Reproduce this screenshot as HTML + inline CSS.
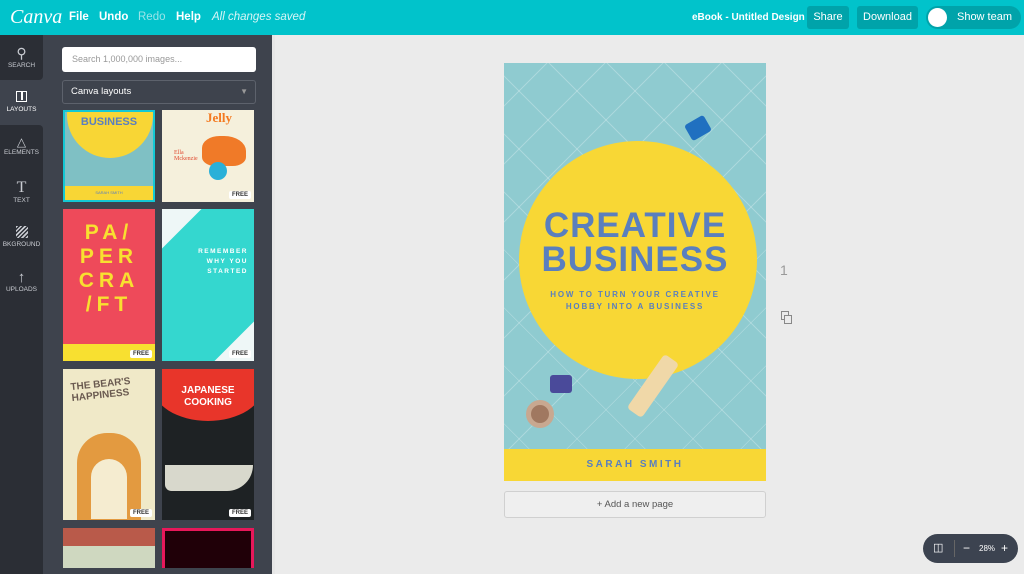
<!DOCTYPE html>
<html><head><meta charset="utf-8"><style>
*{box-sizing:border-box;margin:0;padding:0}
body{width:1024px;height:574px;overflow:hidden;background:#ebebeb;font-family:"Liberation Sans",sans-serif;position:relative}
.top{position:absolute;left:0;top:0;width:1024px;height:35px;background:#01c3cb;color:#fff;font-size:11.5px;font-weight:bold}
.top span{position:absolute;top:11px}
.btn{position:absolute;top:6px;height:23px;background:#00a3aa;border-radius:3px;color:#fff;font-size:11px;text-align:center;line-height:23px;font-weight:normal}
.rail{position:absolute;left:0;top:35px;width:43px;height:539px;background:#3e434d}
.ri{position:absolute;left:0;width:43px;color:#c9ccd2;font-size:6.5px;text-align:center}
.panel{position:absolute;left:43px;top:35px;width:232px;height:539px;background:#3e434d;overflow:hidden}
.th{position:absolute;overflow:hidden}
.free{position:absolute;right:3px;bottom:3px;background:#fff;color:#333;font-size:6px;font-weight:bold;padding:1px 3px;border-radius:2px}
</style></head><body>
<div class="top">
<span style="left:10px;top:6px;font-family:'Liberation Serif',serif;font-style:italic;font-size:20px;font-weight:normal">Canva</span>
<span style="left:69px">File</span><span style="left:99px">Undo</span><span style="left:138px;color:#9ae4e8;font-weight:normal">Redo</span><span style="left:176px">Help</span>
<span style="left:212px;font-style:italic;font-weight:normal;color:#d8f5f6">All changes saved</span>
<span style="left:692px;font-size:10px;top:12px">eBook - Untitled Design</span>
<div class="btn" style="left:807px;width:42px">Share</div>
<div class="btn" style="left:857px;width:61px">Download</div>
<div class="btn" style="left:926px;width:95px;border-radius:12px;padding-left:22px">Show team<div style="position:absolute;left:2px;top:2px;width:19px;height:19px;border-radius:50%;background:#fff"></div></div>
</div>
<div class="rail">
<div style="position:absolute;left:0;top:0;width:43px;height:45px;background:#2b2e35;border-radius:0 0 4px 0"></div>
<div style="position:absolute;left:0;top:90px;width:43px;height:449px;background:#2b2e35;border-radius:0 4px 0 0"></div>
<div class="ri" style="top:10px"><div style="font-size:14px">&#9906;</div>SEARCH</div>
<div class="ri" style="top:56px;color:#fff"><div style="width:11px;height:11px;border:1.5px solid #fff;margin:0 auto 4px;position:relative"><div style="position:absolute;left:4px;top:0;width:1.5px;height:8px;background:#fff"></div></div>LAYOUTS</div>
<div class="ri" style="top:100px"><div style="font-size:12px">&#9651;</div>ELEMENTS</div>
<div class="ri" style="top:144px"><div style="font-size:16px;font-family:'Liberation Serif'">T</div>TEXT</div>
<div class="ri" style="top:191px"><div style="width:12px;height:12px;margin:0 auto 3px;background:repeating-linear-gradient(135deg,#c9ccd2 0 1.5px,transparent 1.5px 3px)"></div>BKGROUND</div>
<div class="ri" style="top:234px"><div style="font-size:15px">&#8593;</div>UPLOADS</div>
</div>
<div class="panel">
<div style="position:absolute;left:19px;top:12px;width:194px;height:25px;background:#fff;border-radius:3px;color:#999;font-size:9px;line-height:25px;padding-left:10px">Search 1,000,000 images...</div>
<div style="position:absolute;left:19px;top:45px;width:194px;height:24px;border:1px solid #5d626c;border-radius:3px;color:#fff;font-size:9.5px;line-height:22px;padding-left:8px">Canva layouts<span style="position:absolute;right:7px;top:0;color:#999;font-size:8px">&#9660;</span></div>
<div style="position:absolute;left:229px;top:0;width:3px;height:539px;background:#e6e6e6"></div>
<div class="th" style="left:20px;top:75px;width:92px;height:92px;background:#7fc0c4;border:2px solid #14c8d4">
<div style="position:absolute;left:2px;top:-40px;width:86px;height:86px;border-radius:50%;background:#f8d635"></div>
<div style="position:absolute;left:0;top:4px;width:88px;text-align:center;color:#5a7fc0;font-weight:900;font-size:11px">BUSINESS</div>
<div style="position:absolute;left:0;bottom:0;width:88px;height:14px;background:#f8d635;color:#5a7fc0;font-size:4px;text-align:center;line-height:14px">SARAH SMITH</div></div>
<div class="th" style="left:119px;top:75px;width:92px;height:92px;background:#f5f0dc">
<div style="position:absolute;left:44px;top:0;color:#f47a20;font-family:'Liberation Serif';font-size:13px;font-weight:bold">Jelly</div>
<div style="position:absolute;left:40px;top:26px;width:44px;height:30px;background:#f07a28;border-radius:40% 50% 30% 30%"></div>
<div style="position:absolute;left:47px;top:52px;width:18px;height:18px;border-radius:50%;background:#2ab0d8"></div>
<div style="position:absolute;left:12px;top:40px;color:#e04a30;font-family:'Liberation Serif';font-size:6px">Ella<br>Mckenzie</div>
<div class="free">FREE</div></div>
<div class="th" style="left:20px;top:174px;width:92px;height:152px;background:#ee4a5a">
<div style="position:absolute;left:0;top:12px;width:92px;text-align:center;color:#f8e030;font-weight:bold;font-size:21px;letter-spacing:5px;line-height:24px">PA/<br>PER<br>CRA<br>/FT</div>
<div style="position:absolute;left:0;bottom:0;width:92px;height:17px;background:#f8e030"></div>
<div class="free">FREE</div></div>
<div class="th" style="left:119px;top:174px;width:92px;height:152px;background:#34d7cf">
<div style="position:absolute;left:-40px;top:-40px;width:70px;height:70px;background:#eef7f7;transform:rotate(45deg)"></div>
<div style="position:absolute;right:-40px;bottom:-40px;width:70px;height:70px;background:#eef7f7;transform:rotate(45deg)"></div>
<div style="position:absolute;right:6px;top:38px;text-align:right;color:#fff;font-size:6.5px;font-weight:bold;letter-spacing:1.5px;line-height:10px">REMEMBER<br>WHY YOU<br>STARTED</div>
<div class="free">FREE</div></div>
<div class="th" style="left:20px;top:334px;width:92px;height:151px;background:#f0e9c8">
<div style="position:absolute;left:8px;top:10px;color:#6a5a50;font-weight:bold;font-size:10px;transform:rotate(-6deg)">THE BEAR'S<br>HAPPINESS</div>
<div style="position:absolute;left:14px;top:64px;width:64px;height:90px;background:#e39a40;border-radius:30px 30px 0 0"></div>
<div style="position:absolute;left:28px;top:90px;width:36px;height:60px;background:#f5ecd0;border-radius:18px 18px 0 0"></div>
<div class="free">FREE</div></div>
<div class="th" style="left:119px;top:334px;width:92px;height:151px;background:#1e2224">
<div style="position:absolute;left:-10px;top:-20px;width:112px;height:72px;background:#e8352a;border-radius:0 0 50% 50%"></div>
<div style="position:absolute;left:0;top:16px;width:92px;text-align:center;color:#fff;font-weight:bold;font-size:10px;line-height:12px">JAPANESE<br>COOKING</div>
<div style="position:absolute;left:3px;top:96px;width:88px;height:26px;background:#d8d8cc;border-radius:0 0 40px 10px"></div>
<div class="free">FREE</div></div>
<div class="th" style="left:20px;top:493px;width:92px;height:40px;background:#b95a4a"><div style="position:absolute;left:0;top:18px;width:92px;height:22px;background:#cfd8c0"></div></div>
<div class="th" style="left:119px;top:493px;width:92px;height:40px;background:#e8185a"><div style="position:absolute;left:3px;top:3px;width:86px;height:37px;background:#200008"></div></div>
</div>
<div style="position:absolute;left:504px;top:63px;width:262px;height:418px;background:#8fcbd0;overflow:hidden;background-image:repeating-linear-gradient(45deg,transparent 0 40px,rgba(255,255,255,.25) 40px 41px),repeating-linear-gradient(-45deg,transparent 0 40px,rgba(255,255,255,.25) 40px 41px)">
<div style="position:absolute;left:15px;top:78px;width:238px;height:238px;border-radius:50%;background:#f8d735"></div>
<div style="position:absolute;left:0;top:146px;width:262px;text-align:center;color:#5a7fbe;font-weight:900;font-size:35px;line-height:34px;letter-spacing:1px">CREATIVE<br>BUSINESS</div>
<div style="position:absolute;left:0;top:226px;width:262px;text-align:center;color:#5a7fbe;font-weight:bold;font-size:8px;letter-spacing:1.8px;line-height:12px">HOW TO TURN YOUR CREATIVE<br>HOBBY INTO A BUSINESS</div>
<div style="position:absolute;left:140px;top:290px;width:18px;height:66px;background:#f0d8a8;transform:rotate(35deg);border-radius:4px"></div>
<div style="position:absolute;left:22px;top:337px;width:28px;height:28px;border-radius:50%;background:#a07860;border:5px solid #c8a890"></div>
<div style="position:absolute;left:46px;top:312px;width:22px;height:18px;background:#4a4a9a;border-radius:3px"></div>
<div style="position:absolute;left:183px;top:56px;width:22px;height:18px;background:#2070c0;border-radius:3px;transform:rotate(-30deg)"></div>
<div style="position:absolute;left:0;top:386px;width:262px;height:32px;background:#f8d735;color:#5a7fbe;font-weight:bold;font-size:10px;letter-spacing:2.5px;text-align:center;line-height:32px">SARAH SMITH</div>
</div>
<div style="position:absolute;left:504px;top:491px;width:262px;height:27px;border:1px solid #d0d0d0;border-radius:3px;background:#efefef;color:#555;font-size:9.5px;text-align:center;line-height:25px">+ Add a new page</div>
<div style="position:absolute;left:780px;top:262px;color:#999;font-size:14px">1</div>
<div style="position:absolute;left:781px;top:311px;width:8px;height:9px;border:1px solid #888"></div>
<div style="position:absolute;left:784px;top:315px;width:8px;height:9px;border:1px solid #888;background:#ebebeb"></div>
<div style="position:absolute;left:923px;top:534px;width:95px;height:29px;border-radius:15px;background:#3c4350;color:#fff;font-size:8px;line-height:29px">
<span style="position:absolute;left:10px;font-size:11px">&#9707;</span>
<div style="position:absolute;left:31px;top:6px;width:1px;height:17px;background:#666"></div>
<span style="position:absolute;left:40px;font-size:12px">&minus;</span><span style="position:absolute;left:56px">28%</span><span style="position:absolute;left:78px;font-size:12px">+</span></div>
</body></html>
